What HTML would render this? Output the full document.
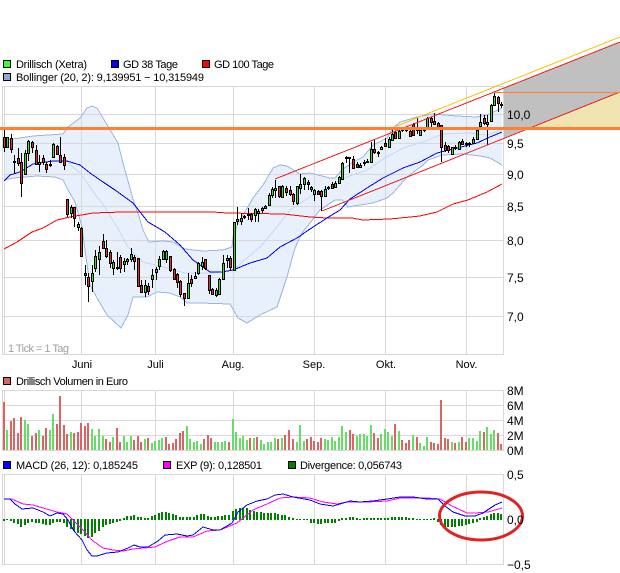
<!DOCTYPE html>
<html><head><meta charset="utf-8"><style>
html,body{margin:0;padding:0;background:#fff;width:620px;height:573px;overflow:hidden}
svg{display:block;position:absolute;left:0;top:0}
text{font-family:"Liberation Sans",sans-serif;font-size:11px;fill:#000}
.l{fill:none;shape-rendering:crispEdges}
</style></head><body>
<svg width="620" height="573" viewBox="0 0 620 573" xmlns="http://www.w3.org/2000/svg">
<rect width="620" height="573" fill="#fff"/>
<!-- projected channel fills -->
<polygon points="503,88 620,42 620,92 503,138" fill="#c0c0c0"/>
<polygon points="530,128 620,92 620,128" fill="#f0e4b0"/>
<!-- bollinger fill -->
<polygon fill="#e8f0fc" points="4,140 20,138 33,136 63,134 68,127 80,118 87,108 92,106 97,108 103,118 112,133 118,143 123,163 133,199 138,213 143,230 149,242 163,241 173,242 185,249 203,251 223,250 232,247 233,237 238,223 248,207 253,198 263,185 273,168 280,165 287,166 300,174 310,173 330,178 335,178 342,170 353,162 363,157 373,145 387,138 393,128 400,122 417,117 433,114 457,116 477,117 487,115 502,108 502,165 490,158 480,156 463,154 442,155 428,160 423,165 407,177 400,185 393,193 387,198 373,203 360,205 348,207 342,200 335,200 320,210 310,223 302,233 295,248 287,277 277,307 260,315 247,323 238,318 230,304 200,303 187,303 180,297 170,293 157,292 147,297 133,297 128,315 121,328 107,315 97,298 90,285 85,250 82,227 75,202 68,190 63,180 55,177 37,176 13,178 4,180"/>
<!-- grid main -->
<path class="l" stroke="#d8d8d8" d="M2 86.5H503.5M2 114.5H503M2 143.5H503M2 174.5H503M2 206.5H503M2 240.5H503M2 277.5H503M2 316.5H503M2 354.5H503.5M2.500 86V355M4.500 86V355M81.500 86V355M155.500 86V355M233.500 86V355M314.500 86V355M385.500 86V355M466.500 86V355M503.500 86V355"/>
<!-- grid volume -->
<path class="l" stroke="#d8d8d8" d="M2 390.500H503.500M2 405.500H503M2 420.500H503M2 435.500H503M2 450.500H503.500M2.500 390V451M4.500 390V451M81.500 390V451M155.500 390V451M233.500 390V451M314.500 390V451M385.500 390V451M466.500 390V451M503.500 390V451"/>
<!-- grid macd -->
<path class="l" stroke="#d8d8d8" d="M2 474.500H503.500M2 564.500H503.500M2.500 474V565M4.500 474V565M81.500 474V565M155.500 474V565M233.500 474V565M314.500 474V565M385.500 474V565M466.500 474V565M503.500 474V565"/>
<!-- bollinger lines -->
<polyline class="l" stroke="#c4d8f8" points="65,160 80,173 97,197 100,200 117,227 128,247 143,262 167,268 185,273 213,273 233,270 260,247 277,227 290,210 310,197 325,189 347,177 367,170 385,158 403,148 423,142 443,134 470,133 487,135 502,130"/>
<polyline class="l" stroke="#9db3e0" points="4,140 20,138 33,136 63,134 68,127 80,118 87,108 92,106 97,108 103,118 112,133 118,143 123,163 133,199 138,213 143,230 149,242 163,241 173,242 185,249 203,251 223,250 232,247 233,237 238,223 248,207 253,198 263,185 273,168 280,165 287,166 300,174 310,173 330,178 335,178 342,170 353,162 363,157 373,145 387,138 393,128 400,122 417,117 433,114 457,116 477,117 487,115 502,108"/>
<polyline class="l" stroke="#9db3e0" points="502,165 490,158 480,156 463,154 442,155 428,160 423,165 407,177 400,185 393,193 387,198 373,203 360,205 348,207 342,200 335,200 320,210 310,223 302,233 295,248 287,277 277,307 260,315 247,323 238,318 230,304 200,303 187,303 180,297 170,293 157,292 147,297 133,297 128,315 121,328 107,315 97,298 90,285 85,250 82,227 75,202 68,190 63,180 55,177 37,176 13,178 4,180"/>
<!-- MAs -->
<polyline class="l" stroke="#ff0000" points="4,249 17,242 32,232 43,228 57,220 70,217 93,213 122,212 213,212 227,213 283,214 310,217 327,218 352,218 363,220 390,219 420,216 437,212 453,204 468,200 487,192 502,184"/>
<polyline class="l" stroke="#0000e0" points="4,181 10,175 20,172 33,164 53,161 67,161 80,165 90,173 103,182 115,190 133,203 148,222 165,232 180,245 193,260 210,272 222,272 233,270 250,263 267,258 280,247 297,238 310,229 327,218 340,210 350,199 367,188 383,178 403,168 420,162 437,153 457,148 477,143 490,137 502,132"/>
<!-- wicks -->
<g transform="translate(.5,0)"><path class="l" stroke="#000" d="M4 130V152M7 137V147M11 134V153M14 155V173M18 148V166M21 153V197M25 150V175M28 140V161M32 141V153M36 145V165M39 155V172M43 155V165M46 162V173M50 160V167M53 143V158M57 145V154M60 137V163M64 154V170M67 199V217M71 205V218M74 207V227M78 222V231M81 227V257M85 265V285M88 273V302M92 265V292M95 250V272M99 246V275M103 234V249M106 240V258M110 250V268M113 260V275M117 252V270M120 255V273M124 258V272M127 258V265M131 248V262M134 255V270M138 258V286M141 280V293M145 280V297M148 283V295M152 269V288M156 267V280M159 256V270M163 250V260M166 250V263M170 256V272M174 268V280M177 273V288M180 280V297M184 293V306M188 273V298M191 275V287M195 272V279M198 262V275M202 257V270M205 259V270M209 275V294M212 288V295M216 288V297M219 278V295M223 255V280M227 255V268M230 256V270M234 222V270M237 207V225M241 213V225M244 215V219M248 208V220M251 213V222M255 208V222M258 209V222M262 207V213M265 205V209M269 193V206M272 187V198M275 180V198M279 186V198M282 185V197M286 186V196M290 186V196M293 193V205M297 186V205M300 174V194M304 177V190M308 180V190M311 186V192M314 189V201M318 190V195M321 190V211M325 186V197M328 186V190M332 182V188M335 181V188M339 176V183M342 162V180M346 156V163M349 157V173M353 156V168M357 162V168M360 163V168M364 160V166M367 159V163M371 142V163M374 140V154M378 151V157M381 146V150M385 138V147M389 137V147M392 130V140M395 131V139M399 127V139M402 127V132M406 128V132M410 128V137M413 123V136M417 118V134M420 128V136M424 127V132M427 117V128M431 117V127M434 113V124M438 122V128M441 125V162M445 142V152M448 145V153M452 147V154M455 145V150M459 141V150M462 139V145M466 142V147M469 142V147M473 137V144M477 130V140M480 114V126M484 115V125M487 115V145M491 104V122M494 93V105M498 96V112M501 102V108"/></g>
<!-- green bodies -->
<g transform="translate(.5,.5)"><path class="l" fill="#33dd33" stroke="#000" style="fill:#33dd33" d="M6 137h2V147h-2zM24 153h2V174h-2zM27 141h2V153h-2zM38 162h2V164h-2zM49 164h2V165h-2zM52 144h2V157h-2zM70 207h2V213h-2zM77 224h2V227h-2zM91 273h2V281h-2zM94 256h2V268h-2zM98 252h2V259h-2zM112 262h2V268h-2zM123 261h2V264h-2zM126 259h2V261h-2zM130 254h2V259h-2zM144 285h2V292h-2zM151 275h2V279h-2zM155 269h2V272h-2zM158 259h2V266h-2zM162 251h2V259h-2zM165 251h2V259h-2zM187 283h2V298h-2zM194 276h2V278h-2zM197 263h2V273h-2zM201 262h2V266h-2zM215 290h2V295h-2zM218 279h2V294h-2zM222 263h2V279h-2zM226 258h2V260h-2zM233 222h2V270h-2zM236 219h2V221h-2zM240 218h2V221h-2zM243 216h2V217h-2zM247 214h2V215h-2zM254 209h2V215h-2zM257 211h2V213h-2zM261 208h2V210h-2zM264 206h2V208h-2zM268 195h2V205h-2zM271 189h2V195h-2zM274 188h2V190h-2zM281 186h2V197h-2zM296 186h2V203h-2zM299 184h2V188h-2zM303 178h2V184h-2zM310 187h2V189h-2zM313 190h2V194h-2zM324 189h2V196h-2zM327 187h2V188h-2zM334 183h2V187h-2zM338 177h2V183h-2zM341 163h2V179h-2zM345 157h2V158h-2zM348 157h2V158h-2zM359 165h2V167h-2zM363 162h2V163h-2zM366 161h2V162h-2zM370 149h2V162h-2zM377 152h2V153h-2zM380 147h2V149h-2zM388 139h2V147h-2zM391 134h2V140h-2zM398 131h2V138h-2zM401 129h2V130h-2zM405 129h2V130h-2zM416 127h2V130h-2zM419 130h2V135h-2zM423 129h2V130h-2zM426 118h2V127h-2zM451 147h2V154h-2zM454 147h2V148h-2zM458 142h2V149h-2zM465 143h2V144h-2zM468 143h2V144h-2zM472 139h2V143h-2zM476 130h2V139h-2zM479 122h2V126h-2zM486 122h2V124h-2zM490 105h2V121h-2zM493 96h2V105h-2zM500 104h2V105h-2z"/></g>
<!-- red bodies -->
<g transform="translate(.5,.5)"><path class="l" style="fill:#e62e2e" stroke="#000" d="M3 137h2V147h-2zM10 138h2V149h-2zM13 161h2V162h-2zM17 158h2V163h-2zM20 162h2V183h-2zM31 142h2V147h-2zM35 150h2V164h-2zM42 158h2V162h-2zM45 164h2V169h-2zM56 146h2V154h-2zM59 155h2V162h-2zM63 157h2V165h-2zM66 199h2V214h-2zM73 207h2V218h-2zM80 228h2V256h-2zM84 273h2V275h-2zM87 277h2V286h-2zM102 241h2V248h-2zM105 248h2V256h-2zM109 252h2V263h-2zM116 267h2V268h-2zM119 257h2V268h-2zM133 257h2V261h-2zM137 258h2V286h-2zM140 285h2V292h-2zM147 286h2V291h-2zM169 256h2V270h-2zM173 269h2V279h-2zM176 274h2V282h-2zM179 281h2V294h-2zM183 293h2V298h-2zM190 279h2V283h-2zM204 259h2V268h-2zM208 275h2V290h-2zM211 289h2V294h-2zM229 258h2V267h-2zM250 214h2V219h-2zM278 186h2V196h-2zM285 188h2V192h-2zM289 190h2V194h-2zM292 194h2V201h-2zM307 182h2V184h-2zM317 191h2V194h-2zM320 191h2V196h-2zM331 184h2V188h-2zM352 159h2V168h-2zM356 164h2V167h-2zM373 149h2V152h-2zM384 143h2V146h-2zM394 132h2V138h-2zM409 131h2V136h-2zM412 124h2V135h-2zM430 118h2V122h-2zM433 121h2V124h-2zM437 123h2V127h-2zM440 125h2V147h-2zM444 145h2V150h-2zM447 146h2V150h-2zM461 141h2V144h-2zM483 118h2V123h-2zM497 97h2V103h-2z"/></g>
<!-- channel lines -->
<line class="l" x1="394" y1="127" x2="620" y2="37" stroke="#ffc000"/>
<line class="l" x1="275" y1="179" x2="620" y2="42" stroke="#ee2020"/>
<line class="l" x1="322" y1="211" x2="620" y2="92" stroke="#ee2020"/>
<rect x="495" y="92" width="125" height="1" fill="#ff8030"/>
<rect x="0" y="127" width="620" height="3" fill="#ff8030"/>
<!-- volume -->
<path class="l" stroke="#d96464" stroke-width="2" d="M4 450V402M11 450V421M14 450V418M18 450V433M21 450V417M32 450V436M36 450V433M43 450V436M46 450V428M57 450V424M60 450V396M64 450V425M67 450V434M74 450V433M78 450V432M81 450V423M85 450V426M88 450V423M106 450V439M110 450V442M117 450V428M120 450V442M134 450V440M138 450V436M141 450V442M148 450V438M166 450V437M169 450V444M173 450V443M176 450V439M180 450V433M183 450V431M204 450V439M208 450V435M211 450V438M229 450V442M250 450V438M257 450V437M278 450V439M285 450V435M289 450V430M293 450V439M307 450V439M311 450V437M314 450V441M318 450V442M321 450V438M350 450V430M353 450V434M374 450V433M378 450V438M395 450V424M402 450V440M406 450V443M409 450V440M417 450V437M431 450V442M434 450V443M438 450V444M441 450V400M445 450V438M448 450V439M455 450V443M462 450V437M466 450V442M484 450V432M498 450V433M501 450V444"/>
<path class="l" stroke="#66dd66" stroke-width="2" d="M7 450V430M25 450V420M28 450V424M39 450V430M50 450V430M53 450V414M71 450V432M92 450V429M95 450V436M99 450V429M103 450V436M113 450V437M124 450V436M127 450V442M131 450V436M145 450V439M152 450V443M155 450V441M159 450V440M162 450V438M187 450V426M190 450V439M194 450V442M197 450V441M201 450V444M215 450V442M218 450V442M222 450V442M225 450V441M233 450V419M236 450V432M240 450V438M243 450V436M247 450V440M254 450V438M261 450V440M264 450V444M268 450V442M271 450V442M275 450V438M282 450V438M297 450V442M300 450V425M304 450V441M325 450V439M328 450V440M332 450V437M335 450V441M339 450V437M342 450V426M346 450V432M357 450V436M360 450V434M364 450V434M367 450V436M371 450V425M381 450V434M385 450V429M388 450V432M392 450V436M399 450V431M413 450V435M420 450V443M424 450V446M427 450V437M452 450V442M459 450V442M469 450V438M473 450V438M477 450V441M480 450V431M487 450V427M491 450V434M494 450V430"/>
<!-- divergence -->
<path class="l" stroke="#008000" stroke-width="2" d="M4 519V521M7 519V520M11 519V521M14 519V523M18 519V524M21 519V527M25 519V525M28 519V523M32 519V522M36 519V523M39 519V523M43 519V524M46 519V525M50 519V525M53 519V523M57 519V522M60 519V522M64 519V523M67 519V527M71 519V529M74 519V531M78 519V533M81 519V534M85 519V536M88 519V538M92 519V537M95 519V533M99 519V531M103 519V527M106 519V525M110 519V524M113 519V523M117 519V522M120 519V521M124 520V518M127 520V516M131 520V516M134 520V515M138 520V517M141 520V517M145 520V518M148 520V518M152 520V516M155 520V515M159 520V513M162 520V512M166 520V512M169 520V513M173 520V514M176 520V515M180 520V517M183 520V517M187 520V517M190 520V517M194 520V517M197 520V515M201 520V514M204 520V514M208 520V516M211 520V517M215 520V517M218 520V516M222 520V516M225 520V515M229 520V515M233 520V511M236 520V509M240 520V508M243 520V508M247 520V508M250 520V510M254 520V511M257 520V512M261 520V512M264 520V513M268 520V513M271 520V513M275 520V513M278 520V514M282 520V515M285 520V515M289 520V517M293 520V518M297 520V519M300 520V519M304 520V519M307 520V519M311 519V523M314 519V523M318 519V524M321 519V524M325 519V523M328 519V523M332 519V523M335 519V523M339 519V521M342 520V518M346 520V518M350 520V517M353 520V517M357 520V518M360 520V519M364 520V518M367 520V518M371 520V518M374 520V518M378 520V518M381 520V518M385 520V518M388 520V518M392 520V517M395 520V517M399 520V517M402 520V517M406 520V517M409 520V518M413 520V518M417 520V519M420 520V519M424 520V519M427 520V519M431 520V519M434 520V518M438 519V522M441 519V525M445 519V527M448 519V527M452 519V527M455 519V527M459 519V526M462 519V526M466 519V525M469 519V524M473 519V523M477 519V522M480 520V518M484 520V517M487 520V516M491 520V514M494 520V513M498 520V513M501 520V514"/>
<!-- macd lines -->
<polyline class="l" stroke="#ff00ff" points="4,499 12,499 23,504 33,505 43,508 57,512 67,514 75,522 83,530 93,541 103,548 113,550 123,551 133,549 155,547 168,541 180,537 193,537 207,531 220,530 237,523 253,510 267,504 280,498 293,497 310,498 323,502 337,504 347,502 367,502 387,501 400,498 427,498 440,499 452,506 467,513 475,513 488,512 502,508"/>
<polyline class="l" stroke="#0000f0" points="4,499 10,499 15,504 22,509 33,508 43,512 50,516 57,513 63,514 68,520 74,531 82,540 87,550 92,556 97,556 107,553 118,552 128,548 134,545 140,547 148,547 158,541 165,535 177,534 187,536 193,535 203,527 213,530 220,530 232,523 238,512 247,505 257,501 267,499 275,495 283,494 293,497 310,500 320,504 333,506 340,504 350,501 360,502 373,501 387,499 400,497 413,497 427,499 438,499 445,506 453,512 465,516 475,516 483,513 495,505 502,502"/>
<ellipse cx="481" cy="516" rx="41.500" ry="24" fill="none" stroke="#e22222" stroke-width="3"/>
<!-- legend squares -->
<g stroke="#000" transform="translate(.5,.5)">
<rect x="3" y="60" width="7" height="7" fill="#33ff33"/>
<rect x="111" y="60" width="7" height="7" fill="#0000ff"/>
<rect x="202" y="60" width="7" height="7" fill="#ff0000"/>
<rect x="3" y="73" width="7" height="7" fill="#8fa8d8"/>
<rect x="3" y="377" width="7" height="7" fill="#d96464"/>
<rect x="3" y="461" width="7" height="7" fill="#0000ff"/>
<rect x="163" y="461" width="7" height="7" fill="#ff00ff"/>
<rect x="288" y="461" width="7" height="7" fill="#008000"/>
</g>
<!-- texts -->
<text x="16" y="68" textLength="71">Drillisch (Xetra)</text>
<text x="123" y="68" textLength="55">GD 38 Tage</text>
<text x="214" y="68" textLength="60">GD 100 Tage</text>
<text x="16" y="81" textLength="188">Bollinger (20, 2): 9,139951 − 10,315949</text>
<text x="16" y="385" textLength="112">Drillisch Volumen in Euro</text>
<text x="16" y="469" textLength="122">MACD (26, 12): 0,185245</text>
<text x="176" y="469" textLength="86">EXP (9): 0,128501</text>
<text x="300" y="469" textLength="102">Divergence: 0,056743</text>
<text x="8" y="352" textLength="61" style="fill:#a0a0a0">1 Tick = 1 Tag</text>
<g text-anchor="middle">
<text x="82" y="368">Juni</text><text x="155.500" y="368">Juli</text><text x="233" y="368">Aug.</text><text x="314" y="368">Sep.</text><text x="386" y="368">Okt.</text><text x="466.500" y="368">Nov.</text>
</g>
<text x="507" y="119" font-size="12" style="font-size:12px">10,0</text>
<text x="507" y="148" style="font-size:12px">9,5</text>
<text x="507" y="179" style="font-size:12px">9,0</text>
<text x="507" y="211" style="font-size:12px">8,5</text>
<text x="507" y="245" style="font-size:12px">8,0</text>
<text x="507" y="282" style="font-size:12px">7,5</text>
<text x="507" y="321" style="font-size:12px">7,0</text>
<text x="507" y="395" style="font-size:12px">8M</text>
<text x="507" y="410" style="font-size:12px">6M</text>
<text x="507" y="425" style="font-size:12px">4M</text>
<text x="507" y="440" style="font-size:12px">2M</text>
<text x="507" y="455" style="font-size:12px">0M</text>
<text x="507" y="479" style="font-size:12px">0,5</text>
<text x="507" y="524" style="font-size:12px">0,0</text>
<text x="507" y="569" style="font-size:12px">−0,5</text>
</svg>
</body></html>
